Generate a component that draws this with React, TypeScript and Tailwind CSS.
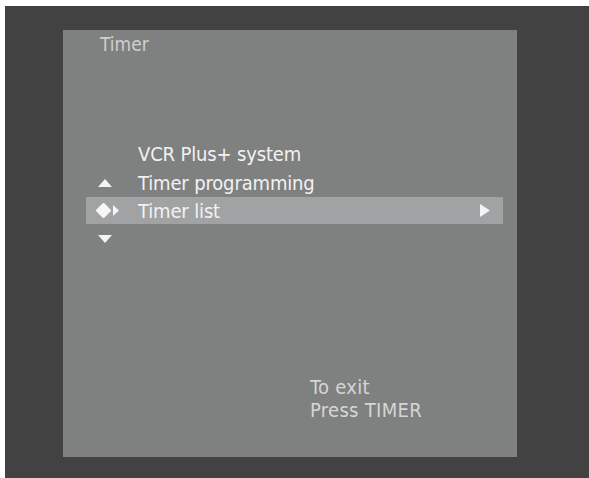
import React from 'react';

const osdFont = { fontFamily: '"DejaVu Sans Condensed", "Liberation Sans Narrow", "DejaVu Sans", sans-serif' };

const TriUp = () => (
  <svg width="14" height="8" viewBox="0 0 14 8">
    <polygon points="7,0 14,8 0,8" fill="#f4f4f4" />
  </svg>
);

const TriDown = () => (
  <svg width="14" height="8" viewBox="0 0 14 8">
    <polygon points="0,0 14,0 7,8" fill="#f4f4f4" />
  </svg>
);

const TriRight = ({ w = 7, h = 12 }: { w?: number; h?: number }) => (
  <svg width={w} height={h} viewBox={`0 0 ${w} ${h}`}>
    <polygon points={`0,0 ${w},${h / 2} 0,${h}`} fill="#f4f4f4" />
  </svg>
);

// four-way cursor pad: rounded diamond
const Diamond = () => (
  <svg width="15" height="15" viewBox="0 0 15 15">
    <path d="M7.5 0.5 L14.5 7.5 L7.5 14.5 L0.5 7.5 Z" fill="#f6f6f6" stroke="#f6f6f6" strokeWidth="1.5" strokeLinejoin="round" />
  </svg>
);

type Row = { label: string; lead?: React.ReactNode; active?: boolean };

const rows: Row[] = [
  { label: 'VCR Plus+ system' },
  { label: 'Timer programming', lead: <span className="ml-[12px] flex items-center"><TriUp /></span> },
  {
    label: 'Timer list',
    active: true,
    lead: (
      <span className="ml-[10px] flex items-center gap-[2px]">
        <Diamond />
        <TriRight w={6} h={11} />
      </span>
    ),
  },
  { label: '', lead: <span className="ml-[12px] flex items-center"><TriDown /></span> },
];

export default function App() {
  return (
    <div className="w-[589px] h-[478px] bg-white pt-[6px] pl-[5px] overflow-hidden" style={osdFont}>
      <div className="w-full h-full bg-[#424242] pt-[24px] pl-[58px]">
        <div className="w-[454px] h-[427px] bg-[#7f8080] flex flex-col">
          <div className="pl-[37px] pt-[3px] text-[19px] leading-[22px] text-[#cfcfcf]">Timer</div>

          <div className="mt-[84px] pl-[23px] w-[440px] flex flex-col">
            {rows.map((r, i) => (
              <div
                key={i}
                className={`flex items-center ${r.active ? 'h-[27px] bg-[#a1a2a3]' : 'h-[29px]'}`}
              >
                <div className="w-[52px] h-full flex items-center">{r.lead}</div>
                <span className="flex-1 text-[20px] leading-[24px] text-[#f2f2f2] tracking-[-0.15px]">{r.label}</span>
                {r.active && (
                  <span className="pr-[13px] flex items-center">
                    <TriRight w={10} h={13} />
                  </span>
                )}
              </div>
            ))}
          </div>

          <div className="mt-[123px] pl-[247px] text-[20px] leading-[23px] text-[#d6d6d6] tracking-[0.3px]">
            <div>To exit</div>
            <div>Press TIMER</div>
          </div>
        </div>
      </div>
    </div>
  );
}
